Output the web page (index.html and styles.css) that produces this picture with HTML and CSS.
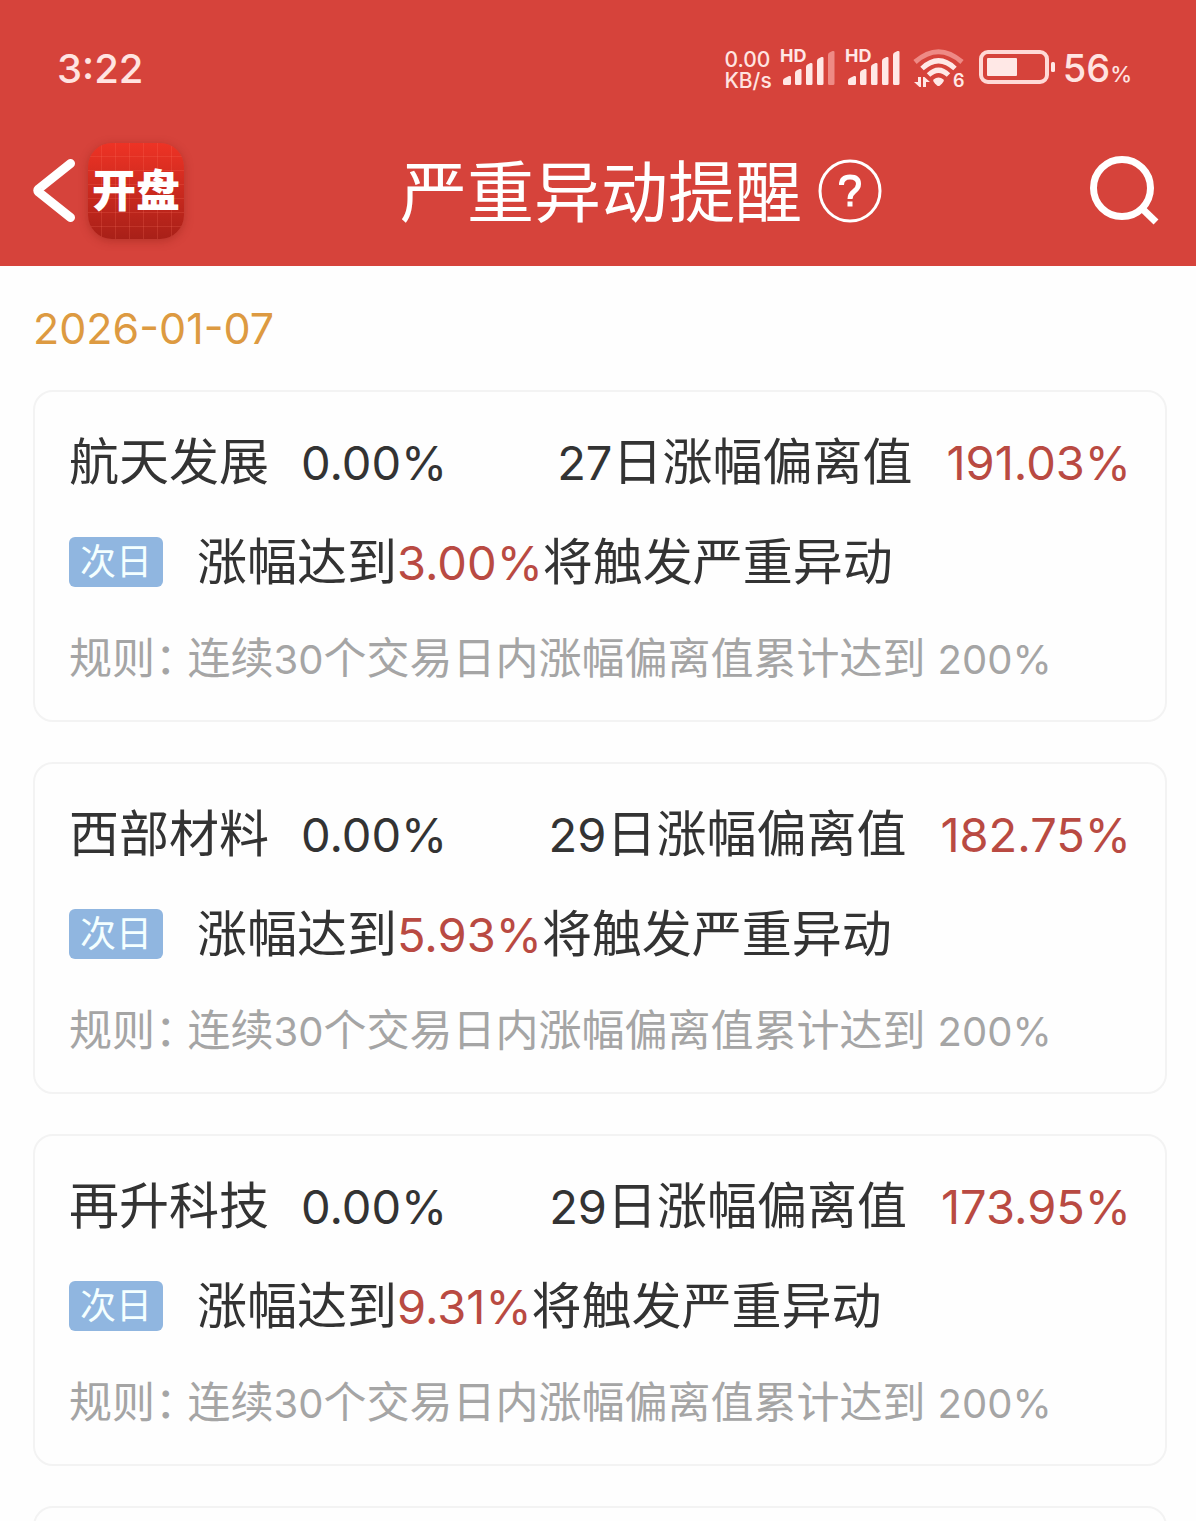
FILE: index.html
```html
<!DOCTYPE html>
<html lang="zh-CN">
<head>
<meta charset="utf-8">
<meta name="viewport" content="width=device-width, initial-scale=1">
<title>严重异动提醒</title>
<link rel="stylesheet" href="styles.css">
</head>
<body>
<header class="header">
  <div class="status">
    <span class="clock">3:22</span>
    <div class="status-right">
      <div class="speed"><span>0.00</span><span>KB/s</span></div>
      <svg class="signal" width="56" height="40" viewBox="0 0 56 40" aria-hidden="true">
        <text class="hd" x="0" y="14">HD</text>
        <path d="M3 35.500v-3q0-2 2-2.500l4-2q2-.5 2 1v6.500q0 1.500-1.500 1.500h-5q-1.500 0-1.500-1.500zM15 25q0-2 1.500-2.500l3-1.500q2-.5 2 1v13.500q0 1.500-1.500 1.500h-3.500q-1.500 0-1.500-1.500zM26 19q0-2 1.500-2.500l3-1.500q2-.5 2 1v19.500q0 1.500-1.500 1.500h-3.500q-1.500 0-1.500-1.500zM37 13q0-2 1.500-2.500l3-1.500q2-.5 2 1v25.500q0 1.500-1.500 1.500h-3.500q-1.500 0-1.500-1.500z"/>
        <path class="dim" d="M48 7q0-2 1.500-2.500l3-1.500q2-.5 2 1v31.500q0 1.500-1.500 1.500h-3.500q-1.500 0-1.500-1.500z"/>
      </svg>
      <svg class="signal" width="56" height="40" viewBox="0 0 56 40" aria-hidden="true">
        <text class="hd" x="0" y="14">HD</text>
        <path d="M3 35.500v-3q0-2 2-2.500l4-2q2-.5 2 1v6.500q0 1.500-1.500 1.500h-5q-1.500 0-1.500-1.500zM15 25q0-2 1.500-2.500l3-1.500q2-.5 2 1v13.500q0 1.500-1.500 1.500h-3.500q-1.500 0-1.500-1.500zM26 19q0-2 1.500-2.500l3-1.500q2-.5 2 1v19.500q0 1.500-1.500 1.500h-3.500q-1.500 0-1.500-1.500zM37 13q0-2 1.500-2.500l3-1.500q2-.5 2 1v25.500q0 1.500-1.500 1.500h-3.500q-1.500 0-1.500-1.500zM48 7q0-2 1.500-2.500l3-1.500q2-.5 2 1v31.500q0 1.500-1.500 1.500h-3.500q-1.500 0-1.500-1.500z"/>
      </svg>
      <svg class="wifi" width="52" height="40" viewBox="0 0 52 40" aria-hidden="true">
        <path class="arc dim-arc" d="M2 14Q25.500-6.500 49 14"/>
        <path class="arc" d="M9 20.500Q25.500 5 42 20.500"/>
        <path class="arc" d="M15.500 27Q25.500 17.500 35.500 27"/>
        <path d="M20.500 31.500q5-4 10 0q1.500 1.500-3.500 6q-1.500 1.200-3 0q-5-4.500-3.500-6z"/>
        <path d="M5 29h3v10h-1.500L1 34h4zM10 39v-10h1.500l5.500 5h-4v5z"/>
        <text class="band" x="40" y="39">6</text>
      </svg>
      <svg class="battery" width="78" height="36" viewBox="0 0 78 36" aria-hidden="true">
        <rect class="shell" x="2" y="2" width="66" height="30" rx="7"/>
        <rect x="8" y="8" width="30" height="18" rx="1"/>
        <rect x="72" y="12" width="4" height="10" rx="1.500"/>
      </svg>
      <div class="percent">56<small>%</small></div>
    </div>
  </div>
  <nav class="nav">
    <div class="nav-side">
      <button class="icon-button" type="button" aria-label="返回">
        <svg width="46" height="68" viewBox="0 0 46 68"><path class="chevron" d="M40.500 6.500L8.500 32Q7 33.500 8.500 35L40.500 60.500"/></svg>
      </button>
      <a class="logo" href="#">开盘</a>
    </div>
    <h1 class="nav-title">严重异动提醒</h1>
    <div class="nav-side nav-end">
      <button class="icon-button" type="button" aria-label="帮助">
        <svg width="64" height="64" viewBox="0 0 64 64">
          <circle class="ring" cx="32" cy="32" r="30"/>
          <path class="question" d="M23.500 26q0-8 8.500-8t8.500 7q0 4-4.500 7.500q-4 3-4 7.500"/>
          <rect class="dot" x="29.500" y="42.500" width="5" height="5"/>
        </svg>
      </button>
      <button class="icon-button" type="button" aria-label="搜索">
        <svg width="70" height="72" viewBox="0 0 70 72"><circle class="lens" cx="32" cy="33" r="28.500"/><path class="handle" d="M51.500 53L66 67"/></svg>
      </button>
    </div>
  </nav>
</header>
<main class="content">
  <time class="date" datetime="2026-01-07">2026-01-07</time>
  <article class="card">
    <div class="row quote">
      <span>航天发展</span><span class="num change">0.00%</span>
      <span class="deviation"><span class="num">27</span>日涨幅偏离值</span><span class="num up">191.03%</span>
    </div>
    <div class="row trigger"><span class="badge">次日</span><span>涨幅达到<em class="num up">3.00%</em>将触发严重异动</span></div>
    <p class="rule"><span class="rule-label">规则：</span>连续<span class="rule-num">30</span>个交易日内涨幅偏离值累计达到 <span class="rule-num">200%</span></p>
  </article>
  <article class="card">
    <div class="row quote">
      <span>西部材料</span><span class="num change">0.00%</span>
      <span class="deviation"><span class="num">29</span>日涨幅偏离值</span><span class="num up">182.75%</span>
    </div>
    <div class="row trigger"><span class="badge">次日</span><span>涨幅达到<em class="num up">5.93%</em>将触发严重异动</span></div>
    <p class="rule"><span class="rule-label">规则：</span>连续<span class="rule-num">30</span>个交易日内涨幅偏离值累计达到 <span class="rule-num">200%</span></p>
  </article>
  <article class="card">
    <div class="row quote">
      <span>再升科技</span><span class="num change">0.00%</span>
      <span class="deviation"><span class="num">29</span>日涨幅偏离值</span><span class="num up">173.95%</span>
    </div>
    <div class="row trigger"><span class="badge">次日</span><span>涨幅达到<em class="num up">9.31%</em>将触发严重异动</span></div>
    <p class="rule"><span class="rule-label">规则：</span>连续<span class="rule-num">30</span>个交易日内涨幅偏离值累计达到 <span class="rule-num">200%</span></p>
  </article>
  <article class="card card-next"></article>
</main>
</body>
</html>
```

FILE: styles.css
```css
* {
  box-sizing: border-box;
}

html,
body {
  height: 100%;
}

body {
  margin: 0;
  display: flex;
  flex-direction: column;
  background: #fefefe;
  color: #333;
  font-family: Inter, "Noto Sans CJK SC", sans-serif;
}

.header {
  flex: none;
  background: #d6433b;
  color: #fff;
}

.status {
  display: flex;
  justify-content: space-between;
  align-items: center;
  height: 116px;
  padding: 20px 64px 0 57px;
  color: #ffe4e1;
}

.clock {
  font-size: 40px;
  font-weight: 500;
}

.status-right {
  display: flex;
  align-items: center;
}

.status svg {
  overflow: visible;
  fill: #ffe8e6;
}

.speed {
  display: flex;
  flex-direction: column;
  padding-top: 4px;
  margin-right: 8px;
  font-size: 21px;
  line-height: 21px;
  font-weight: 500;
}

.signal {
  margin-right: 9px;
}

.hd {
  font-family: Inter, sans-serif;
  font-size: 18px;
  font-weight: 700;
}

.status .dim {
  fill: #ee8a85;
}

.wifi {
  margin-left: 3px;
  margin-right: 14px;
}

.status .arc {
  fill: none;
  stroke: #ffe8e6;
  stroke-width: 5;
}

.status .dim-arc {
  stroke: #ee8a85;
}

.band {
  font-size: 18px;
  font-weight: 600;
}

.status .shell {
  fill: none;
  stroke: #ffd9d6;
  stroke-width: 4;
}

.battery {
  margin-right: 6px;
}

.percent {
  font-size: 38px;
  font-weight: 500;
}

.percent small {
  font-size: 22px;
}

.nav {
  display: grid;
  grid-template-columns: 1fr auto 1fr;
  align-items: center;
  height: 150px;
  padding: 0 24px 0 30px;
}

.nav-side {
  display: flex;
  align-items: center;
  gap: 12px;
}

.nav-end {
  justify-content: space-between;
  padding: 0 12px 0 16px;
}

.icon-button {
  display: flex;
  padding: 0;
  border: 0;
  background: none;
}

.icon-button svg {
  fill: none;
  stroke: #fff;
}

.chevron {
  stroke-width: 9;
  stroke-linecap: round;
}

.logo {
  display: flex;
  align-items: center;
  justify-content: center;
  width: 96px;
  height: 96px;
  border-radius: 24px;
  background:
    repeating-linear-gradient(90deg, transparent 0 13px, rgba(255, 120, 100, 0.2) 13px 14px),
    repeating-linear-gradient(180deg, transparent 0 13px, rgba(255, 120, 100, 0.2) 13px 14px),
    linear-gradient(#ee3325, #a82018);
  box-shadow: 0 2px 10px rgba(120, 20, 10, 0.35);
  color: #fff;
  font-size: 44px;
  line-height: 96px;
  font-weight: 900;
  text-decoration: none;
}

.nav-title {
  margin: 0;
  padding-top: 4px;
  font-size: 67px;
  line-height: 80px;
  font-weight: 400;
}

.ring {
  stroke-width: 3;
}

.question {
  stroke-width: 5;
}

.icon-button .dot {
  fill: #fff;
  stroke: none;
}

.lens,
.handle {
  stroke-width: 7;
}

.content {
  flex: 1;
  min-height: 0;
  display: flex;
  flex-direction: column;
  gap: 40px;
  padding: 34px 29px 0 33px;
  overflow: hidden;
}

.date {
  color: #dd9a41;
  font-size: 43px;
  line-height: 56px;
  margin-bottom: -6px;
}

.card {
  flex: none;
  display: flex;
  flex-direction: column;
  gap: 40px;
  padding: 40px 34px 36px;
  border: 2px solid #f3f3f3;
  border-radius: 20px;
}

.card-next {
  height: 332px;
}

.row {
  display: flex;
  align-items: center;
  height: 60px;
  font-size: 50px;
  line-height: 60px;
  white-space: nowrap;
}

.num {
  font-size: 47px;
  line-height: 1;
}

.change {
  margin-left: 32px;
}

.deviation {
  margin-left: auto;
  margin-right: 34px;
}

.up {
  color: #b94a42;
  font-style: normal;
}

.badge {
  margin-right: 34px;
  padding: 0 11px;
  border-radius: 6px;
  background: #90b6e0;
  color: #f4ffff;
  font-size: 36px;
  line-height: 50px;
}

.rule {
  margin: 0;
  color: #a5a5a5;
  font-size: 43px;
  line-height: 52px;
  white-space: nowrap;
}

.rule-label {
  margin-right: 11px;
  font-feature-settings: "halt";
}

.rule-num {
  font-size: 40px;
  line-height: 1;
}
```
